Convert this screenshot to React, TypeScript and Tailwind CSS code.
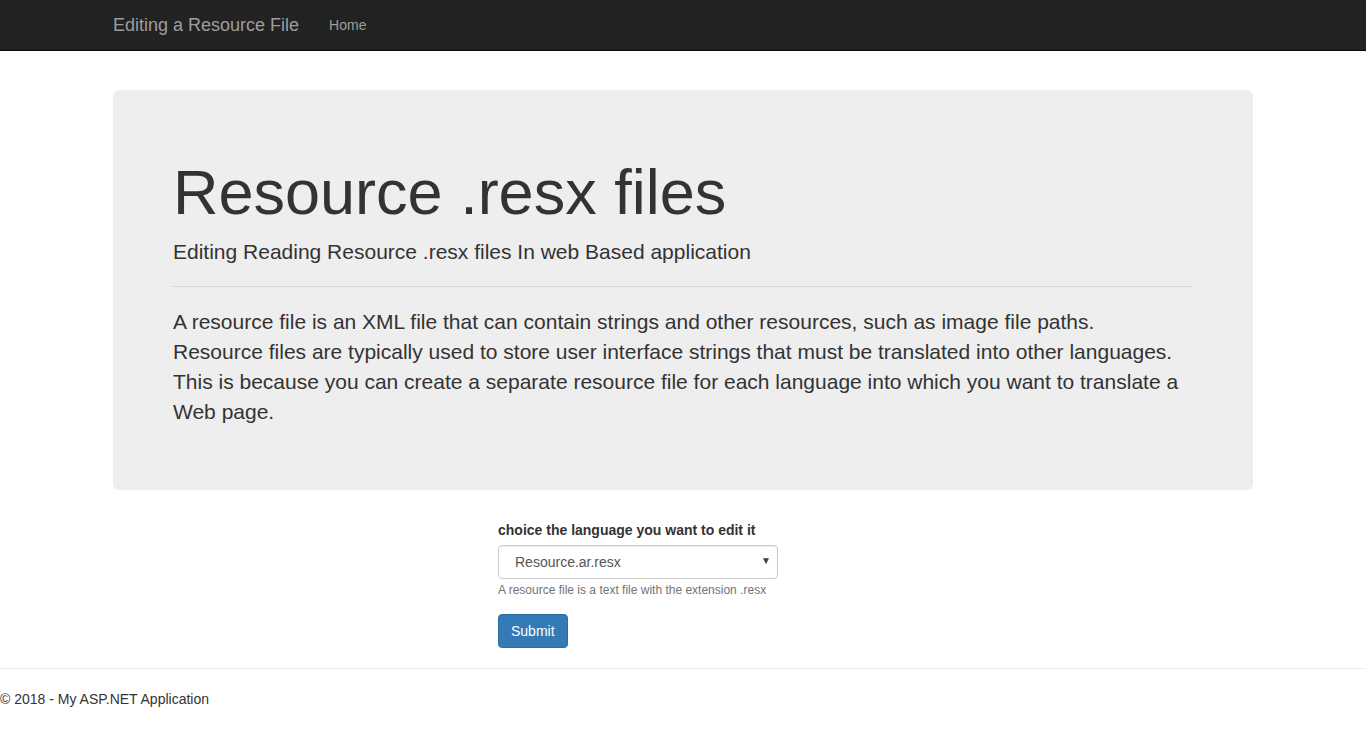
import React from "react";

export default function App() {
  return (
    <div
      className="min-h-[739px] bg-white text-[#333] text-[14px] leading-[20px]"
      style={{ fontFamily: '"Liberation Sans", Arial, Helvetica, sans-serif' }}
    >
      <nav className="h-[51px] bg-[#222] border-b border-[#080808]">
        <div className="w-[1170px] mx-auto px-[15px] flex items-center h-[50px]">
          <span className="text-[18px] leading-[20px] text-[#9d9d9d]">Editing a Resource File</span>
          <span className="ml-[30px] text-[14px] leading-[20px] text-[#9d9d9d]">Home</span>
        </div>
      </nav>

      <div className="w-[1170px] mx-auto px-[15px] pt-[39px]">
        <div className="bg-[#eee] rounded-[6px] px-[60px] pt-[48px] pb-[48px]">
          <h1 className="mt-[20px] mb-[10px] text-[63px] leading-[1.1]">Resource .resx files</h1>
          <p className="text-[21px] leading-[30px]">Editing Reading Resource .resx files In web Based application</p>
          <hr className="mt-[19px] border-0 border-t border-[#d5d5d5]" />
          <p className="mt-[20px] mb-[15px] text-[21px] leading-[30px]">
            A resource file is an XML file that can contain strings and other resources, such as image file paths.
            <br />
            Resource files are typically used to store user interface strings that must be translated into other languages.
            <br />
            This is because you can create a separate resource file for each language into which you want to translate a
            <br />
            Web page.
          </p>
        </div>

        <div className="mt-[30px] ml-[385px] w-[280px]">
          <label className="block font-bold mb-[5px]">choice the language you want to edit it</label>
          <div className="relative h-[34px] border border-[#ccc] rounded-[4px] shadow-[inset_0_1px_1px_rgba(0,0,0,0.075)] bg-white">
            <div className="pl-[16px] pt-[6px] text-[14px] leading-[20px] text-[#555]">Resource.ar.resx</div>
            <span className="absolute right-[6px] top-[8px] text-[10px] leading-[14px] text-[#444]">▼</span>
          </div>
          <p className="mt-[3px] text-[12px] leading-[17px] text-[#737373]">A resource file is a text file with the extension .resx</p>
          <button className="mt-[15px] h-[34px] px-[12px] bg-[#337ab7] border border-[#2e6da4] rounded-[4px] text-white text-[14px] leading-[20px]">
            Submit
          </button>
        </div>
      </div>

      <hr className="mt-[20px] border-0 border-t border-[#eee]" />
      <footer className="mt-[20px]">
        <p>© 2018 - My ASP.NET Application</p>
      </footer>
    </div>
  );
}
